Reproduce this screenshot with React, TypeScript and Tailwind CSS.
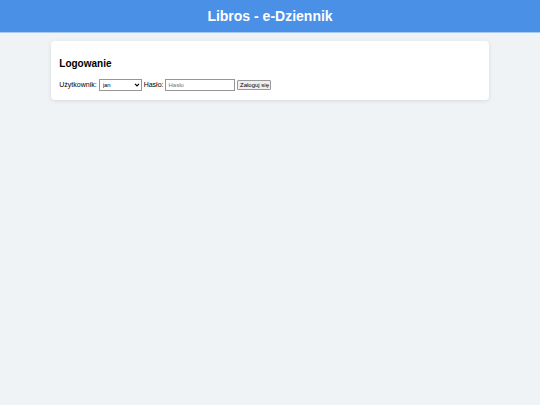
import React from "react";

const users = ["jan", "anna", "piotr"];

const UserSelect = () => {
  const [user, setUser] = React.useState(users[0]);

  return (
    <div className="relative">
      <select
        id="user"
        className="block h-3 w-[43px] appearance-none border border-[#959595] bg-white pl-[3px] text-[6px] leading-2"
        value={user}
        onChange={(e) => setUser(e.target.value)}
      >
        {users.map((name) => (
          <option key={name}>{name}</option>
        ))}
      </select>
      <svg
        className="pointer-events-none absolute top-1 right-0.5 h-1 w-1.5"
        viewBox="0 0 6 4"
        fill="none"
        stroke="black"
        strokeWidth="1.2"
      >
        <path d="M1 0.9 3 2.9 5 0.9" />
      </svg>
    </div>
  );
};

const LoginForm = () => {
  const [password, setPassword] = React.useState("");

  return (
    <form
      className="flex flex-wrap items-center gap-x-0.5 text-[7px] leading-3"
      onSubmit={(e) => e.preventDefault()}
    >
      <label htmlFor="user">Użytkownik:</label>
      <UserSelect />
      <label htmlFor="password">Hasło:</label>
      <input
        id="password"
        type="password"
        placeholder="Hasło"
        className="h-3 w-[70px] border border-[#959595] bg-white px-0.5 text-[6px] placeholder:text-[#757575]"
        value={password}
        onChange={(e) => setPassword(e.target.value)}
      />
      <button
        type="submit"
        className="h-2.5 w-[34px] rounded-[1px] border border-[#9a9a9a] bg-[#efefef] text-[6px] leading-2 whitespace-nowrap"
      >
        Zaloguj się
      </button>
    </form>
  );
};

export default function App() {
  return (
    <div className="min-h-screen bg-[#eff3f6] font-['Liberation_Sans',Arial,sans-serif] text-black">
      <header className="border-b border-[#a5c8f0] bg-[#4a90e6] py-2 text-center text-white">
        <h1 className="text-sm leading-4 font-bold">Libros - e-Dziennik</h1>
      </header>
      <main className="mx-auto mt-2 w-[81%] rounded bg-white px-2 pt-2 pb-[9px] shadow-[0_1px_4px_rgba(0,0,0,0.1)]">
        <h2 className="my-2 text-[10px] leading-[14px] font-bold">Logowanie</h2>
        <LoginForm />
      </main>
    </div>
  );
}
